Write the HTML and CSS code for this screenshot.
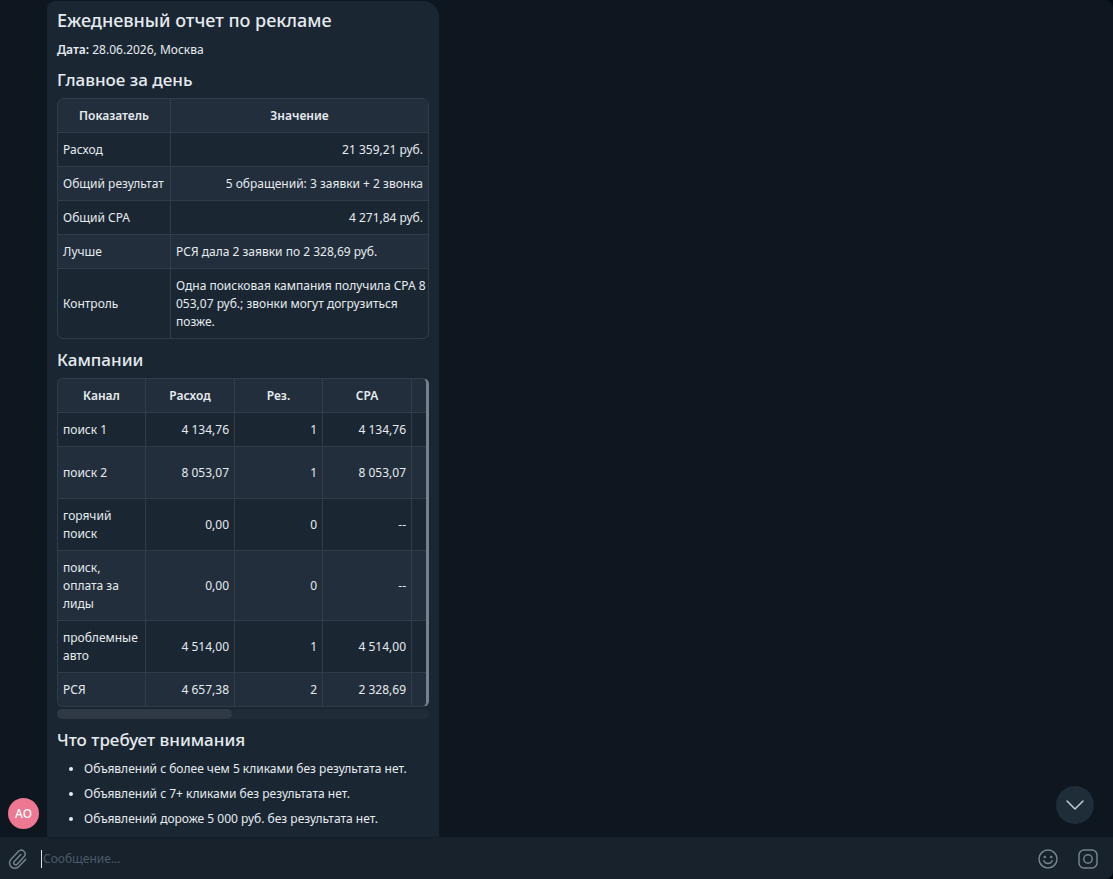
FILE: index.html
```html
<!DOCTYPE html>
<html lang="ru">
<head>
<meta charset="utf-8">
<meta name="viewport" content="width=device-width, initial-scale=1">
<title>Ежедневный отчет по рекламе</title>
<link rel="stylesheet" href="styles.css">
</head>
<body>
<div class="app">
  <main class="chat">
    <div class="avatar">АО</div>
    <article class="message">
      <h1 class="title">Ежедневный отчет по рекламе</h1>
      <p class="date"><strong>Дата:</strong> 28.06.2026, Москва</p>
      <h2 class="heading">Главное за день</h2>
      <div class="table-box">
        <table class="table summary">
          <colgroup><col class="col-name"><col></colgroup>
          <thead><tr><th>Показатель</th><th>Значение</th></tr></thead>
          <tbody>
            <tr><td>Расход</td><td class="num">21 359,21 руб.</td></tr>
            <tr><td>Общий результат</td><td class="num">5 обращений: 3 заявки + 2 звонка</td></tr>
            <tr><td>Общий CPA</td><td class="num">4 271,84 руб.</td></tr>
            <tr><td>Лучше</td><td>РСЯ дала 2 заявки по 2 328,69 руб.</td></tr>
            <tr><td>Контроль</td><td class="lines">Одна поисковая кампания получила CPA 8<br>053,07 руб.; звонки могут догрузиться<br>позже.</td></tr>
          </tbody>
        </table>
      </div>
      <h2 class="heading">Кампании</h2>
      <div class="table-box scrollable">
        <table class="table campaigns">
          <colgroup><col class="col-a"><col class="col-b"><col class="col-a"><col class="col-b"><col></colgroup>
          <thead><tr><th>Канал</th><th>Расход</th><th>Рез.</th><th>CPA</th><th></th></tr></thead>
          <tbody>
            <tr><td>поиск 1</td><td class="num">4 134,76</td><td class="num">1</td><td class="num">4 134,76</td><td></td></tr>
            <tr class="two-lines"><td>поиск 2</td><td class="num">8 053,07</td><td class="num">1</td><td class="num">8 053,07</td><td></td></tr>
            <tr><td>горячий поиск</td><td class="num">0,00</td><td class="num">0</td><td class="num">--</td><td></td></tr>
            <tr><td>поиск, оплата за лиды</td><td class="num">0,00</td><td class="num">0</td><td class="num">--</td><td></td></tr>
            <tr><td>проблемные авто</td><td class="num">4 514,00</td><td class="num">1</td><td class="num">4 514,00</td><td></td></tr>
            <tr><td>РСЯ</td><td class="num">4 657,38</td><td class="num">2</td><td class="num">2 328,69</td><td></td></tr>
          </tbody>
        </table>
      </div>
      <div class="scrollbar"><div class="thumb"></div></div>
      <h2 class="heading">Что требует внимания</h2>
      <ul class="notes">
        <li>Объявлений с более чем 5 кликами без результата нет.</li>
        <li>Объявлений с 7+ кликами без результата нет.</li>
        <li>Объявлений дороже 5 000 руб. без результата нет.</li>
      </ul>
    </article>
    <button class="to-bottom" type="button" aria-label="Вниз">
      <svg width="20" height="12" viewBox="0 0 20 12"><path d="M2 2l8 8 8-8"/></svg>
    </button>
  </main>
  <form class="composer">
    <button class="icon" type="button" aria-label="Прикрепить файл">
      <svg width="20" height="22" viewBox="0 0 20 22"><path d="M12.800 6.600l-6.500 7a1.900 1.900 0 0 0 2.800 2.600l7.100-7.600a3.900 3.900 0 0 0-5.700-5.300L3 11.200a5.400 5.400 0 0 0 7.900 7.400l6.700-7.200"/></svg>
    </button>
    <input class="field" type="text" placeholder="Сообщение..." aria-label="Сообщение">
    <button class="icon" type="button" aria-label="Эмодзи">
      <svg width="20" height="20" viewBox="0 0 20 20"><circle cx="10" cy="10" r="9"/><path d="M5.800 11.800c.9 1.900 2.400 2.800 4.200 2.800s3.300-.9 4.200-2.800"/><circle class="dot" cx="6.800" cy="8" r="1.300"/><circle class="dot" cx="13.200" cy="8" r="1.300"/></svg>
    </button>
    <button class="icon" type="button" aria-label="Видеосообщение">
      <svg width="20" height="20" viewBox="0 0 20 20"><rect x="1" y="1" width="18" height="18" rx="5"/><circle cx="10" cy="10" r="4.200"/></svg>
    </button>
  </form>
</div>
</body>
</html>
```
FILE: styles.css
```css
* { box-sizing: border-box; }

body {
  margin: 0;
  background: #050b11;
  color: #e6ebef;
  font: 12px/18px "Noto Sans", "Open Sans", sans-serif;
}

.app {
  display: flex;
  flex-direction: column;
  height: 100vh;
  overflow: hidden;
  border-radius: 0 8px 8px 0;
  background: #0e1620;
}

.chat {
  position: relative;
  display: flex;
  align-items: flex-end;
  gap: 8px;
  flex: 1;
  min-height: 0;
  padding-left: 8px;
}

.avatar {
  flex: none;
  width: 31px;
  height: 31px;
  margin-bottom: 8px;
  border-radius: 50%;
  background: #ee7792;
  color: #fff;
  font-size: 12px;
  font-weight: 500;
  line-height: 31px;
  text-align: center;
}

.message {
  width: 392px;
  padding: 7px 10px 9px;
  border-radius: 8px 16px 0 0;
  background: #1a2733;
}

.title, .heading {
  margin: 0;
  font-size: 17px;
  font-weight: 500;
  line-height: 24px;
}

.title { font-size: 18px; }

.date { margin: 9px 0; }

.date strong, .table th { font-weight: 600; }

.heading { margin: 9px 0 6px; }

.table-box {
  overflow: hidden;
  border: 1px solid #303d49;
  border-radius: 6px;
}

.scrollable { border-right: 3px solid #75818c; }

.table {
  width: 100%;
  border-collapse: separate;
  border-spacing: 0;
  table-layout: fixed;
}

.col-name { width: 113px; }
.col-a { width: 88px; }
.col-b { width: 89px; }

.table th, .table td {
  height: 34px;
  padding: 8px 5px 7px;
  border-right: 1px solid #303d49;
  border-bottom: 1px solid #303d49;
  text-align: left;
}

.table th { text-align: center; }

.table th:last-child, .table td:last-child { border-right: 0; }
.table tbody tr:last-child td { height: 33px; border-bottom: 0; }
.table thead tr, .table tbody tr:nth-child(even) { background: #222e3b; }
.table .num { text-align: right; }
.table .lines { white-space: nowrap; }
.table .two-lines td { height: 52px; }

.scrollbar {
  height: 10px;
  margin-top: 2px;
  border-radius: 5px;
  background: #202c38;
}

.thumb {
  width: 47%;
  height: 100%;
  border-radius: 5px;
  background: #2f3a46;
}

.notes {
  display: grid;
  gap: 7px;
  margin: 8px 0 0;
  padding-left: 27px;
}

.to-bottom {
  position: absolute;
  right: 19px;
  bottom: 13px;
  display: grid;
  place-items: center;
  width: 38px;
  height: 38px;
  padding: 0;
  border: 0;
  border-radius: 50%;
  background: #1f2d39;
}

svg {
  display: block;
  fill: none;
  stroke: #75818c;
  stroke-width: 1.5;
  stroke-linecap: round;
  stroke-linejoin: round;
}

.to-bottom svg { stroke: #c5ccd2; }

.composer {
  display: flex;
  align-items: center;
  gap: 20px;
  height: 42px;
  padding: 0 15px 0 8px;
  border-top: 1px solid #14202a;
  background: #17222c;
}

.icon {
  padding: 0;
  border: 0;
  background: none;
}

.dot { fill: #75818c; stroke: none; }

.field {
  flex: 1;
  min-width: 0;
  height: 18px;
  margin-left: -7px;
  padding: 0 0 0 1px;
  border: 0;
  border-left: 1px solid #dce2e6;
  outline: 0;
  background: none;
  color: inherit;
  font: inherit;
}

.field::placeholder { color: #4c5a66; opacity: 1; }
```
